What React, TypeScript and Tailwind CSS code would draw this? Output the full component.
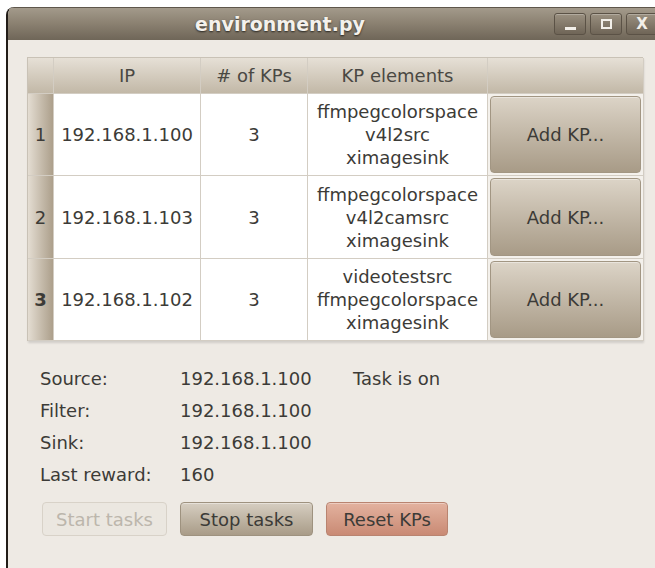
import React from 'react';

const font = { fontFamily: '"DejaVu Sans", "Liberation Sans", sans-serif' };

interface KpRow {
  id: number;
  ip: string;
  count: number;
  elements: string[];
  height: string;
}

const rows: KpRow[] = [
  { id: 1, ip: '192.168.1.100', count: 3, elements: ['ffmpegcolorspace', 'v4l2src', 'ximagesink'], height: 'h-[82px]' },
  { id: 2, ip: '192.168.1.103', count: 3, elements: ['ffmpegcolorspace', 'v4l2camsrc', 'ximagesink'], height: 'h-[83px]' },
  { id: 3, ip: '192.168.1.102', count: 3, elements: ['videotestsrc', 'ffmpegcolorspace', 'ximagesink'], height: 'h-[82px]' },
];

function TitleButton({ children }: { children: React.ReactNode }) {
  return (
    <div className="w-[32px] h-[22px] rounded-[3px] border border-[#5b5246] bg-gradient-to-b from-[#9a9080] to-[#6f6557] flex items-center justify-center shadow-[inset_0_1px_0_rgba(255,255,255,0.25)]">
      {children}
    </div>
  );
}

function Cell({ children, className = '' }: { children?: React.ReactNode; className?: string }) {
  return (
    <div className={`border-r border-b border-[#d3cdc3] flex items-center justify-center ${className}`}>
      {children}
    </div>
  );
}

export default function App() {
  return (
    <div className="w-[655px] h-[568px] bg-white overflow-hidden pt-[7px] pl-[6px]" style={font}>
      <div className="w-[680px] h-[561px] rounded-tl-[8px] border-l-2 border-[#221d18] bg-[#eeeae4] overflow-hidden flex flex-col">
        {/* Title bar */}
        <div className="h-[33px] shrink-0 bg-gradient-to-b from-[#a39a8b] via-[#8a8070] to-[#6f6658] border-t border-[#5e564b] flex items-center">
          <div className="w-[544px] flex justify-center">
            <span className="text-[19px] font-bold text-[#f4f1ec] [text-shadow:0_1px_2px_rgba(0,0,0,0.7)] leading-none">
              environment.py
            </span>
          </div>
          <div className="flex gap-[4px] ml-[2px]">
            <TitleButton>
              <div className="w-[11px] h-[3px] bg-[#f2efe9] mt-[8px]" />
            </TitleButton>
            <TitleButton>
              <div className="w-[11px] h-[10px] border-2 border-[#f2efe9]" />
            </TitleButton>
            <TitleButton>
              <span className="text-[15px] font-bold text-[#f2efe9] leading-none">X</span>
            </TitleButton>
          </div>
        </div>

        {/* Window body */}
        <div className="pl-[19px] pt-[17px] text-[18px] text-[#3c3b37]">
          <div className="w-[616px] grid grid-cols-[26px_147px_107px_180px_156px] border-l border-t border-[#c9c2b6] shadow-[1px_2px_2px_rgba(0,0,0,0.12)]">
            {/* Header */}
            <Cell className="h-[36px] bg-gradient-to-b from-[#e6e0d6] to-[#c2b8a7]" />
            <Cell className="h-[36px] bg-gradient-to-b from-[#e6e0d6] to-[#c2b8a7] text-[#4a4843]">IP</Cell>
            <Cell className="h-[36px] bg-gradient-to-b from-[#e6e0d6] to-[#c2b8a7] text-[#4a4843]"># of KPs</Cell>
            <Cell className="h-[36px] bg-gradient-to-b from-[#e6e0d6] to-[#c2b8a7] text-[#4a4843]">KP elements</Cell>
            <Cell className="h-[36px] bg-gradient-to-b from-[#e6e0d6] to-[#c2b8a7]" />

            {rows.map((row) => (
              <React.Fragment key={row.id}>
                <Cell className={`${row.height} bg-gradient-to-r from-[#e4ddd2] to-[#ac9f8b] ${row.id === 3 ? 'font-bold' : ''}`}>
                  {row.id}
                </Cell>
                <Cell className={`${row.height} bg-white`}>{row.ip}</Cell>
                <Cell className={`${row.height} bg-white`}>{row.count}</Cell>
                <Cell className={`${row.height} bg-white flex-col leading-[23px]`}>
                  {row.elements.map((el) => (
                    <span key={el}>{el}</span>
                  ))}
                </Cell>
                <Cell className={`${row.height} bg-[#f4f1ec] px-[2px] py-[2px]`}>
                  <button className="w-full h-full rounded-[4px] border border-[#a29683] bg-gradient-to-b from-[#dcd4c7] to-[#a89b87] shadow-[inset_0_1px_0_rgba(255,255,255,0.4)] text-[#3c3b37]">
                    Add KP...
                  </button>
                </Cell>
              </React.Fragment>
            ))}
          </div>

          {/* Status */}
          <div className="mt-[21px] ml-[13px] grid grid-cols-[140px_173px_auto] auto-rows-[32px] items-center">
            <span>Source:</span>
            <span>192.168.1.100</span>
            <span>Task is on</span>
            <span>Filter:</span>
            <span>192.168.1.100</span>
            <span />
            <span>Sink:</span>
            <span>192.168.1.100</span>
            <span />
            <span>Last reward:</span>
            <span>160</span>
            <span />
          </div>

          {/* Actions */}
          <div className="mt-[12px] ml-[15px] flex gap-[13px]">
            <button disabled className="w-[125px] h-[34px] rounded-[4px] border border-[#d8d2c8] bg-[#ebe7e0] text-[#bcb6ac]">
              Start tasks
            </button>
            <button className="w-[133px] h-[34px] rounded-[4px] border border-[#9e927f] bg-gradient-to-b from-[#d6cec1] to-[#a99c88] text-[#3c3b37] shadow-[inset_0_1px_0_rgba(255,255,255,0.4)]">
              Stop tasks
            </button>
            <button className="w-[122px] h-[34px] rounded-[4px] border border-[#b98470] bg-gradient-to-b from-[#e3b29f] to-[#c98a74] text-[#3c3b37] shadow-[inset_0_1px_0_rgba(255,255,255,0.35)]">
              Reset KPs
            </button>
          </div>
        </div>
      </div>
    </div>
  );
}
